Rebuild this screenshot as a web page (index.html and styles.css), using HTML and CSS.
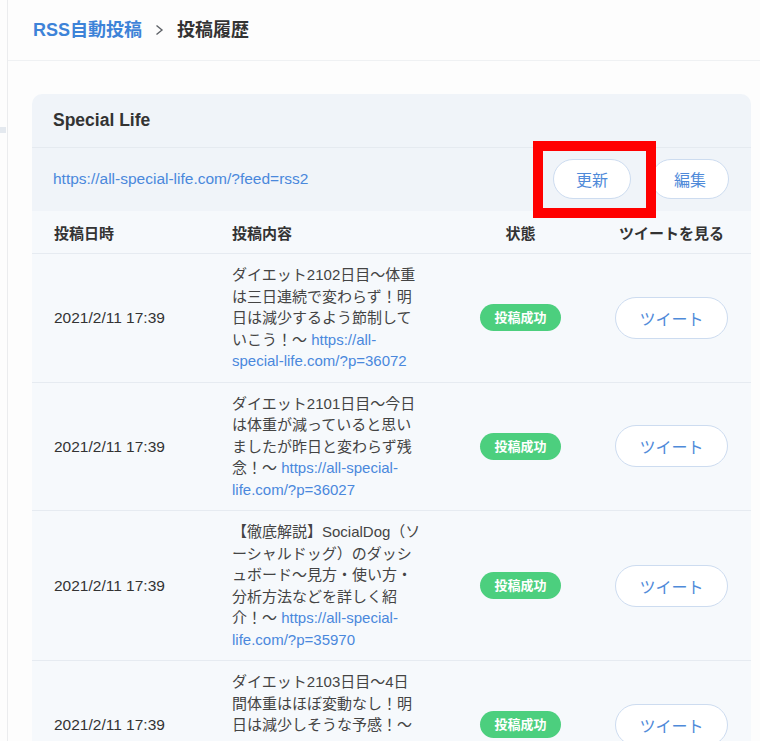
FILE: index.html
```html
<!DOCTYPE html>
<html lang="ja">
<head>
    <meta charset="UTF-8">
    <meta name="viewport" content="width=device-width, initial-scale=1.0">
    <title>投稿履歴 - RSS自動投稿</title>
    <link rel="stylesheet" href="styles.css">
</head>
<body>
    <div class="layout">
        <aside class="sidebar">
            <span class="sidebar-item"></span>
        </aside>

        <div class="main">
            <div class="header">
                <nav class="breadcrumb">
                    <a href="#" class="breadcrumb-link">RSS自動投稿</a>
                    <svg class="breadcrumb-sep" width="9" height="12" viewBox="0 0 9 12">
                        <polyline points="1.5,1.5 7,6 1.5,10.5" fill="none" stroke="#5f6368" stroke-width="1.4"/>
                    </svg>
                    <span class="breadcrumb-current">投稿履歴</span>
                </nav>
            </div>

            <div class="content">
                <div class="card">
                    <div class="card-header">
                        <h2>Special Life</h2>
                    </div>

                    <div class="feed-row">
                        <a href="#" class="feed-url">https://all-special-life.com/?feed=rss2</a>
                        <div class="feed-actions">
                            <span class="marked">
                                <button class="pill-button">更新</button>
                                <span class="mark"></span>
                            </span>
                            <button class="pill-button">編集</button>
                        </div>
                    </div>

                    <div class="history">
                        <div class="history-head">
                            <div>投稿日時</div>
                            <div>投稿内容</div>
                            <div class="center">状態</div>
                            <div class="center">ツイートを見る</div>
                        </div>

                        <div class="history-row">
                            <div class="date">2021/2/11 17:39</div>
                            <div class="post-text">ダイエット2102日目〜体重は三日連続で変わらず！明日は減少するよう節制していこう！〜 <a href="#">https://all-special-life.com/?p=36072</a></div>
                            <div class="center"><span class="badge">投稿成功</span></div>
                            <div class="center"><button class="tweet-button">ツイート</button></div>
                        </div>

                        <div class="history-row">
                            <div class="date">2021/2/11 17:39</div>
                            <div class="post-text">ダイエット2101日目〜今日は体重が減っていると思いましたが昨日と変わらず残念！〜 <a href="#">https://all-special-life.com/?p=36027</a></div>
                            <div class="center"><span class="badge">投稿成功</span></div>
                            <div class="center"><button class="tweet-button">ツイート</button></div>
                        </div>

                        <div class="history-row">
                            <div class="date">2021/2/11 17:39</div>
                            <div class="post-text">【徹底解説】SocialDog（ソーシャルドッグ）のダッシュボード〜見方・使い方・分析方法などを詳しく紹介！〜 <a href="#">https://all-special-life.com/?p=35970</a></div>
                            <div class="center"><span class="badge">投稿成功</span></div>
                            <div class="center"><button class="tweet-button">ツイート</button></div>
                        </div>

                        <div class="history-row">
                            <div class="date">2021/2/11 17:39</div>
                            <div class="post-text">ダイエット2103日目〜4日間体重はほぼ変動なし！明日は減少しそうな予感！〜 <a href="#">https://all-special-life.com/?p=36105</a></div>
                            <div class="center"><span class="badge">投稿成功</span></div>
                            <div class="center"><button class="tweet-button">ツイート</button></div>
                        </div>
                    </div>
                </div>
            </div>
        </div>
    </div>
</body>
</html>
```

FILE: styles.css
```css
body {
    font-family: "Liberation Sans", "Noto Sans CJK JP", sans-serif;
    background-color: #fdfdfd;
    color: #333;
    margin: 0;
    padding: 0;
    overflow: hidden;
}

a {
    color: #4a88dc;
    text-decoration: none;
}

.layout {
    display: flex;
    min-height: 100vh;
}

.sidebar {
    width: 7px;
    border-right: 1px solid #ebecee;
    padding-top: 127px;
}

.sidebar-item {
    display: block;
    width: 6px;
    height: 6px;
    background-color: #e4e9ef;
}

.main {
    flex: 1;
}

.header {
    height: 59px;
    padding: 0 0 1px 25px;
    border-bottom: 1px solid #eff1f3;
    display: flex;
    align-items: center;
}

.breadcrumb {
    display: flex;
    align-items: center;
    gap: 13px;
    font-size: 18px;
    font-weight: bold;
    line-height: 24px;
}

.breadcrumb-link {
    color: #3d83d8;
}

.breadcrumb-current {
    color: #333;
}

.content {
    padding: 33px 9px 0 24px;
}

.card {
    background-color: #f0f4f9;
    border-radius: 10px 10px 0 0;
    overflow: hidden;
}

.card-header {
    padding: 15px 21px;
    border-bottom: 1px solid #e5eaf0;
}

.card-header h2 {
    margin: 0;
    font-size: 17.5px;
    line-height: 23px;
    color: #333;
}

.feed-row {
    display: flex;
    align-items: center;
    justify-content: space-between;
    padding: 11px 22px 12px 21px;
}

.feed-url {
    font-size: 15.5px;
}

.feed-actions {
    display: flex;
    gap: 20px;
}

.marked {
    position: relative;
    display: flex;
}

/* red annotation box around the refresh button */
.mark {
    position: absolute;
    left: -20px;
    top: -18px;
    width: 123px;
    height: 77px;
    box-sizing: border-box;
    border: 10px solid #ff0000;
    z-index: 2;
}

.pill-button {
    height: 40px;
    padding: 0 22px;
    background-color: #fff;
    border: 1px solid #cddcf0;
    border-radius: 20px;
    color: #4f8ad9;
    font-family: inherit;
    font-size: 16px;
    cursor: pointer;
}

.history {
    background-color: #f6f9fc;
}

.history-head,
.history-row {
    display: grid;
    grid-template-columns: 178px 194px 1fr 113px;
    align-items: center;
    padding: 0 23px 0 22px;
    border-bottom: 1px solid #e6ebf1;
}

.history-head {
    min-height: 42px;
    font-size: 15px;
    font-weight: bold;
    color: #333;
}

.history-row {
    padding-top: 10px;
    padding-bottom: 10px;
    font-size: 15px;
    line-height: 21.5px;
    color: #333;
}

.date {
    font-size: 15.5px;
}

.post-text {
    padding-right: 4px;
    color: #444;
}

.center {
    text-align: center;
}

.badge {
    display: inline-block;
    padding: 5px 14px;
    background-color: #4ccf7e;
    color: #fff;
    font-size: 13px;
    font-weight: bold;
    line-height: 17px;
    border-radius: 14px;
}

.tweet-button {
    width: 113px;
    height: 42px;
    background-color: #fff;
    border: 1px solid #cddcf0;
    border-radius: 21px;
    color: #4f8ad9;
    font-family: inherit;
    font-size: 16px;
    cursor: pointer;
}
```
